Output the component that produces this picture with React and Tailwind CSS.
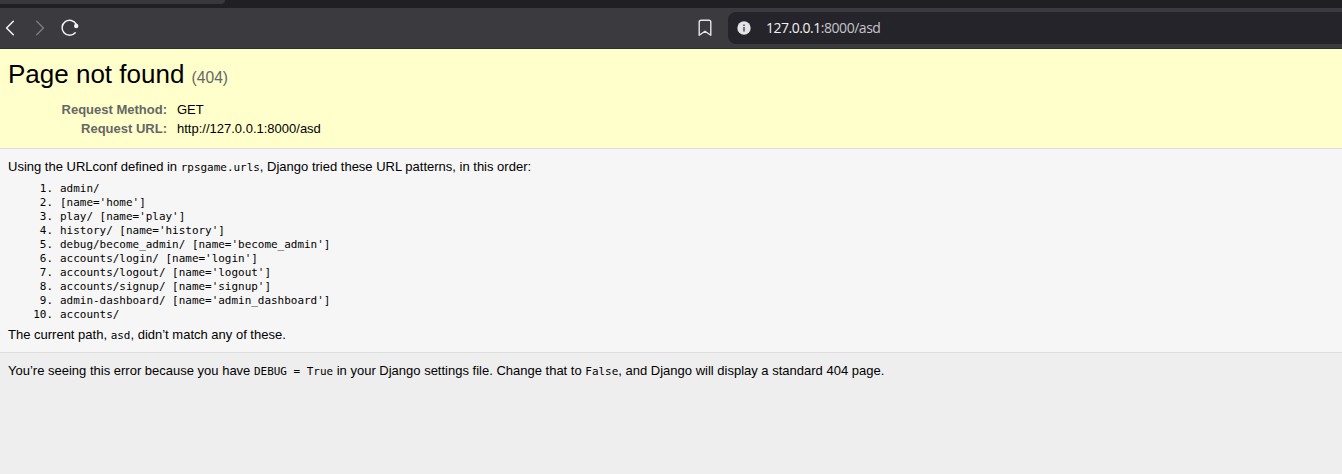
const patterns = [
  "admin/",
  "[name='home']",
  "play/ [name='play']",
  "history/ [name='history']",
  "debug/become_admin/ [name='become_admin']",
  "accounts/login/ [name='login']",
  "accounts/logout/ [name='logout']",
  "accounts/signup/ [name='signup']",
  "admin-dashboard/ [name='admin_dashboard']",
  "accounts/",
];

function Code({ children }) {
  return (
    <code className="font-['DejaVu_Sans_Mono',monospace] text-[10.96px] leading-none">{children}</code>
  );
}

function BrowserChrome() {
  return (
    <div className="h-[49px] bg-[#3b3a3f]">
      <div className="h-2 bg-[#202024]">
        <div className="h-1 w-[225px] rounded-br-[6px] bg-[#38373c]" />
      </div>
      <div className="flex h-[41px] items-start border-b border-[#2f2e33]">
        <svg className="h-10 w-[90px] shrink-0" viewBox="0 8 90 40" fill="none" strokeLinecap="round" strokeLinejoin="round">
          <path d="M13.3 21.2 6.6 28l6.7 6.8" stroke="#f4f4f5" strokeWidth="1.5" />
          <path d="M36.7 21.2 43.4 28l-6.7 6.8" stroke="#7b7a7f" strokeWidth="1.5" />
          <path d="M76.2 24.2A7.5 7.5 0 1 0 75.2 32.8" stroke="#f4f4f5" strokeWidth="1.5" />
          <circle cx="76.2" cy="26" r="2.2" fill="#f4f4f5" />
        </svg>
        <svg className="ml-[608px] h-10 w-[14px] shrink-0" viewBox="698 8 14 40" fill="none">
          <path d="M701 20.2h8a1.8 1.8 0 0 1 1.8 1.8v13.3L705 31.2l-5.8 4.1V22a1.8 1.8 0 0 1 1.8-1.8Z" stroke="#e6e6e8" strokeWidth="1.4" strokeLinejoin="round" />
        </svg>
        <div className="mt-1 ml-4 flex h-8 flex-1 items-center rounded-l-[8px] bg-[#25242a] pl-[9px]">
          <svg className="h-[14px] w-[14px]" viewBox="0 0 14 14">
            <circle cx="7" cy="7" r="6.7" fill="#e4e3e8" />
            <path d="M6.2 3.5h1.6V5H6.2ZM6.2 6.1h1.6v4.3H6.2Z" fill="#55545a" />
          </svg>
          <span className="ml-[15px] font-['Open_Sans',sans-serif] text-[14px] leading-5 tracking-[-0.47px] whitespace-nowrap text-[#c6c5ca]">
            <span className="text-[#f1f1f3]">127.0.0.1</span>:8000/asd
          </span>
        </div>
      </div>
    </div>
  );
}

export default function App() {
  return (
    <div className="flex h-[474px] flex-col overflow-hidden bg-[#eeeeee] font-['Liberation_Sans',Arial,sans-serif] text-[13px] leading-[15px] text-black">
      <BrowserChrome />
      <header className="h-[100px] border-b border-[#dddddd] bg-[#ffffcc] px-2 pt-[10px]">
        <h1 className="text-[26px] leading-[30px] font-normal">
          Page not found <small className="text-[15.6px] text-[#666666]">(404)</small>
        </h1>
        <dl className="mt-[9px] grid grid-cols-[159px_1fr] gap-x-[10px] gap-y-1">
          <dt className="text-right font-bold text-[#666666]">Request Method:</dt>
          <dd>GET</dd>
          <dt className="text-right font-bold text-[#666666]">Request URL:</dt>
          <dd>http://127.0.0.1:8000/asd</dd>
        </dl>
      </header>
      <main className="h-[204px] border-b border-[#dddddd] bg-[#f6f6f6] px-2 pt-[10px]">
        <p>
          Using the URLconf defined in <Code>rpsgame.urls</Code>, Django tried these URL patterns, in this order:
        </p>
        <ol className="mt-2 font-['DejaVu_Sans_Mono',monospace] text-[10.96px] leading-[14px]">
          {patterns.map((pattern, i) => (
            <li key={pattern} className="flex">
              <span className="mr-[7px] w-[45px] text-right">{i + 1}.</span>
              <span className="whitespace-pre">{pattern}</span>
            </li>
          ))}
        </ol>
        <p className="mt-[5px]">
          The current path, <Code>asd</Code>, didn’t match any of these.
        </p>
      </main>
      <footer className="px-2 pt-[10px]">
        <p>
          You’re seeing this error because you have <Code>DEBUG = True</Code> in your Django settings file. Change that to <Code>False</Code>, and Django will display a standard 404 page.
        </p>
      </footer>
    </div>
  );
}
